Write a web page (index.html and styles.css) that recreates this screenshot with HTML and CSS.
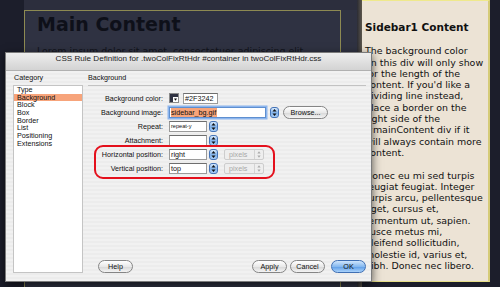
FILE: index.html
```html
<!DOCTYPE html>
<html lang="en">
<head>
  <meta charset="UTF-8">
  <title>CSS Rule Definition</title>
  <link rel="stylesheet" href="styles.css">
</head>
<body>
  <div class="page">
    <div class="gutter"></div>
    <div class="main">
      <div class="main-header"></div>
      <div class="main-content">
        <h1>Main Content</h1>
        <p>Lorem ipsum dolor sit amet, consectetuer adipiscing elit.</p>
      </div>
    </div>
    <div class="divider"></div>
    <div class="sidebar">
      <h3>Sidebar1 Content</h3>
      <p>The background color<br>on this div will only show<br>for the length of the<br>content. If you'd like a<br>dividing line instead,<br>place a border on the<br>right side of the<br>#mainContent div if it<br>will always contain more<br>content.</p>
      <p>Donec eu mi sed turpis<br>feugiat feugiat. Integer<br>turpis arcu, pellentesque<br>eget, cursus et,<br>fermentum ut, sapien.<br>Fusce metus mi,<br>eleifend sollicitudin,<br>molestie id, varius et,<br>nibh. Donec nec libero.</p>
    </div>
    <div class="gutter gutter-right"></div>
  </div>

  <div class="dialog">
    <div class="dialog-title">CSS Rule Definition for .twoColFixRtHdr #container in twoColFixRtHdr.css</div>
    <div class="dialog-body">
      <div class="category">
        <div class="panel-label">Category</div>
        <ul class="category-list">
          <li>Type</li>
          <li class="selected">Background</li>
          <li>Block</li>
          <li>Box</li>
          <li>Border</li>
          <li>List</li>
          <li>Positioning</li>
          <li>Extensions</li>
        </ul>
      </div>
      <div class="settings">
        <div class="panel-label section-head">Background</div>
        <div class="form">
          <label>Background color:</label>
          <div class="controls">
            <span class="swatch">
              <svg width="5" height="5" viewBox="0 0 5 5"><rect width="5" height="5" fill="#fff"/><path d="M1 1.5 H4 L2.5 3.8Z" fill="#111"/></svg>
            </span>
            <span class="field field-color">#2F3242</span>
          </div>

          <label>Background image:</label>
          <div class="controls">
            <span class="field field-wide focused"><span class="sel">sidebar_bg.gif</span></span>
            <span class="stepper wide-gap"><svg width="7" height="9" viewBox="0 0 7 9"><path d="M3.5 1 L5.5 3.6 H1.5Z M3.5 8 L5.5 5.4 H1.5Z" fill="#111"/></svg></span>
            <span class="btn btn-browse">Browse...</span>
          </div>

          <label>Repeat:</label>
          <div class="controls">
            <span class="field field-small tiny">repeat-y</span>
            <span class="stepper"><svg width="7" height="9" viewBox="0 0 7 9"><path d="M3.5 1 L5.5 3.6 H1.5Z M3.5 8 L5.5 5.4 H1.5Z" fill="#111"/></svg></span>
          </div>

          <label>Attachment:</label>
          <div class="controls">
            <span class="field field-small"></span>
            <span class="stepper"><svg width="7" height="9" viewBox="0 0 7 9"><path d="M3.5 1 L5.5 3.6 H1.5Z M3.5 8 L5.5 5.4 H1.5Z" fill="#111"/></svg></span>
          </div>

          <label>Horizontal position:</label>
          <div class="controls">
            <span class="field field-small">right</span>
            <span class="stepper"><svg width="7" height="9" viewBox="0 0 7 9"><path d="M3.5 1 L5.5 3.6 H1.5Z M3.5 8 L5.5 5.4 H1.5Z" fill="#111"/></svg></span>
            <span class="select-off">pixels<svg width="6" height="9" viewBox="0 0 6 9"><path d="M3 1.2 L4.6 3.4 H1.4Z M3 7.8 L4.6 5.6 H1.4Z" fill="#a9a9a9"/></svg></span>
          </div>

          <label>Vertical position:</label>
          <div class="controls">
            <span class="field field-small">top</span>
            <span class="stepper"><svg width="7" height="9" viewBox="0 0 7 9"><path d="M3.5 1 L5.5 3.6 H1.5Z M3.5 8 L5.5 5.4 H1.5Z" fill="#111"/></svg></span>
            <span class="select-off">pixels<svg width="6" height="9" viewBox="0 0 6 9"><path d="M3 1.2 L4.6 3.4 H1.4Z M3 7.8 L4.6 5.6 H1.4Z" fill="#a9a9a9"/></svg></span>
          </div>

          <div class="mark"></div>
        </div>
        <div class="buttons">
          <span class="btn">Help</span>
          <div class="buttons-right">
            <span class="btn">Apply</span>
            <span class="btn">Cancel</span>
            <span class="btn btn-ok">OK</span>
          </div>
        </div>
      </div>
    </div>
  </div>
</body>
</html>
```

FILE: styles.css
```css
body {
  margin: 0;
  background: #1c1e2b;
  font-family: "DejaVu Sans", Verdana, sans-serif;
  overflow: hidden;
}
.page {
  display: flex;
  height: 287px;
}
.gutter {
  width: 24px;
  flex: none;
}
.gutter-right { width: 10px; }
.main {
  width: 333px;
  flex: none;
  background: #2f3242;
  display: flex;
  flex-direction: column;
}
.main-header {
  height: 10px;
  background: #2c2e3d;
}
.main-content {
  width: 317px;
  flex: 1;
  box-sizing: border-box;
  border: 1px solid #8d8a52;
  border-bottom: none;
  padding: 1px 12px 0 12px;
}
.main-content h1 {
  margin: 1px 0 0;
  font-size: 19px;
  line-height: 22px;
  color: #0e1019;
}
.main-content p {
  margin: 10px 0 0;
  font-size: 9.45px;
  line-height: 11.3px;
  color: #12141c;
  white-space: nowrap;
}
.divider {
  width: 5px;
  flex: none;
  background: linear-gradient(to right, #2a2b33, #5d574c);
}
.sidebar {
  width: 128px;
  height: 282px;
  flex: none;
  box-sizing: border-box;
  background: #ece3d5;
  border-top: 1px solid #efe98c;
  border-right: 2px solid #d5cb78;
  border-bottom: 1px solid #e6df88;
  padding: 0 0 0 3px;
  color: #111;
  white-space: nowrap;
}
.sidebar h3 {
  margin: 20px 0 0;
  font-size: 10.5px;
  line-height: 12px;
}
.sidebar p {
  margin: 11.3px 0 0;
  font-size: 9.45px;
  line-height: 11.3px;
}
.sidebar h3 + p { margin-top: 12.3px; }

/* dialog over the page */
.dialog {
  position: absolute;
  left: 5px;
  top: 52px;
  width: 367px;
  height: 230px;
  box-sizing: border-box;
  border: 1px solid #7b7b7b;
  background: repeating-linear-gradient(#ececec 0 2px, #f1f1f1 2px 4px);
  box-shadow: 0 3px 9px rgba(0,0,0,0.65);
  display: flex;
  flex-direction: column;
  font-family: "Liberation Sans", Arial, sans-serif;
  font-size: 7.2px;
  color: #111;
}
.dialog-title {
  height: 18px;
  flex: none;
  box-sizing: border-box;
  padding-top: 1px;
  line-height: 10px;
  text-align: center;
  font-size: 8.1px;
  color: #1a1a1a;
  background: linear-gradient(#eeeeee, #d3d3d3);
  border-bottom: 1px solid #b0b0b0;
}
.dialog-body {
  flex: 1;
  display: flex;
  gap: 5px;
  padding: 2px 5px 8px 7px;
}
.panel-label {
  line-height: 9px;
  height: 9px;
  padding-left: 1px;
}
.category {
  width: 70px;
  display: flex;
  flex-direction: column;
}
.category .panel-label { margin-bottom: 3px; }
.category-list {
  flex: 1;
  margin: 0;
  padding: 0;
  list-style: none;
  background: #fff;
  border: 1px solid #c4c4c4;
}
.category-list li {
  line-height: 7.7px;
  height: 7.7px;
  padding-left: 3px;
}
.category-list li.selected { background: #f7a47b; }
.settings {
  flex: 1;
  display: flex;
  flex-direction: column;
}
.section-head {
  padding-bottom: 3px;
  border-bottom: 1px solid #c2c2c2;
  padding-left: 0;
}
.form {
  position: relative;
  margin-top: 6.5px;
  display: grid;
  grid-template-columns: 75px auto;
  column-gap: 6px;
  row-gap: 3.2px;
}
.form label {
  text-align: right;
  line-height: 11px;
  white-space: nowrap;
}
.controls {
  display: flex;
  align-items: center;
  gap: 2px;
  height: 11px;
}
.field {
  height: 11px;
  box-sizing: border-box;
  background: #fff;
  border: 1px solid #9a9a9a;
  border-top-color: #6e6e6e;
  line-height: 9px;
  padding-left: 1px;
  white-space: nowrap;
  overflow: hidden;
}
.field-color { width: 35px; margin-left: 2px; }
.field-wide { width: 97px; }
.field-small { width: 38px; }
.tiny { font-size: 5.6px; }
.focused {
  border-color: #5e8fd0;
  box-shadow: 0 0 0 1.5px #8db6ee;
}
.sel { background: #f6a47a; padding-right: 1px; }
.swatch {
  width: 10px;
  height: 10px;
  box-sizing: border-box;
  border: 1px solid #8a8a8a;
  background: #2f3242;
  display: flex;
  align-items: flex-end;
  justify-content: flex-end;
}
.swatch svg { display: block; }
.stepper {
  width: 9px;
  height: 11px;
  box-sizing: border-box;
  border: 1px solid #4574b8;
  border-radius: 3px;
  background: linear-gradient(#d8eafc, #7eb0ea 55%, #a9cdf5);
  display: flex;
  align-items: center;
  justify-content: center;
}
.stepper svg { display: block; }
.wide-gap { margin-left: 2px; }
.select-off {
  margin-left: 4px;
  width: 40px;
  height: 11px;
  box-sizing: border-box;
  border: 1px solid #cdcdcd;
  border-radius: 2px;
  background: #eeeeee;
  color: #a8a8a8;
  line-height: 9px;
  padding-left: 4px;
  display: flex;
  justify-content: space-between;
  align-items: center;
}
.select-off svg {
  border-left: 1px solid #d4d4d4;
  padding: 0 1px;
}
.mark {
  position: absolute;
  left: 6px;
  top: 52.5px;
  width: 181px;
  height: 34px;
  box-sizing: border-box;
  border: 2px solid #e4101c;
  border-radius: 9px;
}
.btn {
  width: 35px;
  height: 13px;
  box-sizing: border-box;
  border: 1px solid #858585;
  border-radius: 7px;
  background: linear-gradient(#ffffff, #e9e9e9 50%, #d6d6d6 51%, #f4f4f4);
  text-align: center;
  line-height: 11px;
  color: #111;
}
.btn-browse {
  width: 45px;
  margin-left: 2px;
}
.btn-ok {
  border-color: #3f6fb3;
  background: linear-gradient(#cfe5fc, #86b9f0 50%, #5b9be6 51%, #a9d2fb);
}
.buttons {
  margin-top: auto;
  display: flex;
  justify-content: space-between;
  padding-left: 10px;
}
.buttons-right {
  display: flex;
  gap: 3px;
}
.buttons-right .btn + .btn-ok { margin-left: 3px; }
```
